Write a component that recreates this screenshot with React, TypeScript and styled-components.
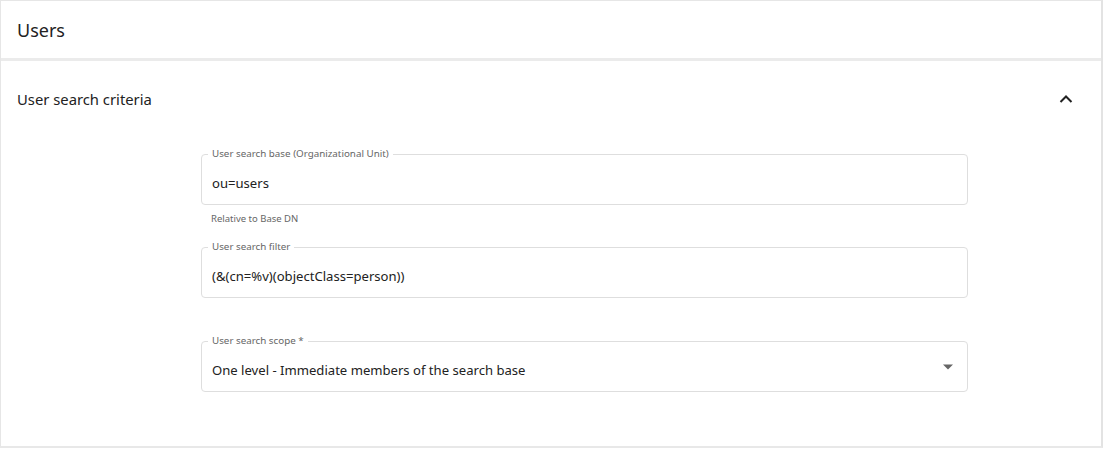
import React from "react";
import styled, { createGlobalStyle } from "styled-components";

const Global = createGlobalStyle`
  html, body { margin: 0; padding: 0; background: #fff; }
  body { font-family: "Noto Sans", "Open Sans", sans-serif; color: #222; }
  * { box-sizing: border-box; }
`;

const Card = styled.div`
  width: 1103px;
  height: 448px;
  border-top: 1px solid #e6e6e6;
  border-left: 1px solid #e6e6e6;
  border-right: 2px solid #e3e3e3;
  border-bottom: 2px solid #e8e8e8;
  display: flex;
  flex-direction: column;
`;

const Header = styled.div`
  height: 60px;
  flex-shrink: 0;
  display: flex;
  align-items: center;
  padding-left: 16px;
  font-size: 18px;
  color: #222;
  border-bottom: 3px solid #ebebeb;
`;

const SectionHead = styled.div`
  height: 76px;
  flex-shrink: 0;
  display: flex;
  align-items: center;
  justify-content: space-between;
  padding: 0 28px 0 16px;
  font-size: 14.8px;
  color: #222;
`;

const Content = styled.div`
  padding: 17px 0 0 200px;
  display: flex;
  flex-direction: column;
`;

const FieldBlock = styled.div<{ $after: number }>`
  width: 767px;
  margin-bottom: ${(p) => p.$after}px;
`;

const Outline = styled.div`
  height: 51px;
  padding: 7px 10px 0 10px;
  border: 1px solid #dedede;
  border-radius: 4px;
  display: flex;
  align-items: center;
  position: relative;
`;

const Label = styled.span`
  position: absolute;
  left: 6px;
  top: -7px;
  font-size: 9.8px;
  line-height: 12px;
  color: #666;
  background: #fff;
  padding: 0 4px;
`;

const Value = styled.div`
  font-size: 13.1px;
  color: #222;
`;

const Helper = styled.div`
  font-size: 9.5px;
  color: #666;
  padding: 7px 0 0 10px;
  height: 42px;
`;

const Arrow = styled.svg`
  position: absolute;
  right: 13px;
  top: 21px;
`;

const Field = ({
  label,
  value,
  helper,
  select,
  after,
}: {
  label: string;
  value: string;
  helper?: string;
  select?: boolean;
  after: number;
}) => (
  <FieldBlock $after={after}>
    <Outline>
      <Label>{label}</Label>
      <Value>{value}</Value>
      {select && (
        <Arrow width="12" height="8" viewBox="0 0 12 8">
          <path d="M1 1.5h10L6 6.5z" fill="#666" />
        </Arrow>
      )}
    </Outline>
    {helper && <Helper>{helper}</Helper>}
  </FieldBlock>
);

export default function App() {
  return (
    <>
      <Global />
      <Card>
        <Header>Users</Header>
        <SectionHead>
          <span>User search criteria</span>
          <svg width="14" height="10" viewBox="0 0 14 10">
            <path d="M1.5 8L7 2.5 12.5 8" fill="none" stroke="#222" strokeWidth="2" />
          </svg>
        </SectionHead>
        <Content>
          <Field
            label="User search base (Organizational Unit)"
            value="ou=users"
            helper="Relative to Base DN"
            after={0}
          />
          <Field
            label="User search filter"
            value="(&(cn=%v)(objectClass=person))"
            after={43}
          />
          <Field
            label="User search scope *"
            value="One level - Immediate members of the search base"
            select
            after={0}
          />
        </Content>
      </Card>
    </>
  );
}
